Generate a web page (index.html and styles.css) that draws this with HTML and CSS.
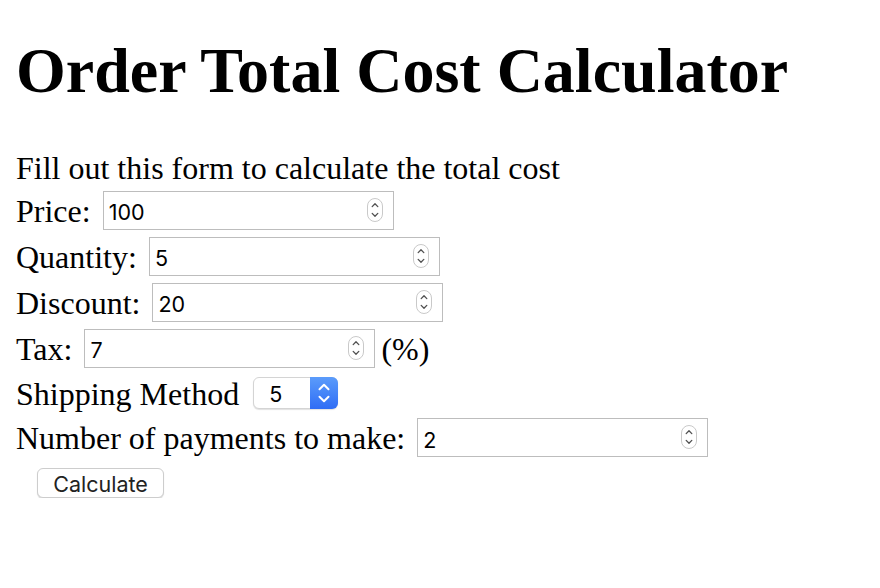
FILE: index.html
```html
<!DOCTYPE html>
<html lang="en">
<head>
<meta charset="utf-8">
<title>Order Total Cost Calculator</title>
<link rel="stylesheet" href="styles.css">
</head>
<body>
<h1 class="title">Order Total Cost Calculator</h1>
<form class="calc">
  <p class="intro">Fill out this form to calculate the total cost</p>

  <div class="row">
    <label class="label" for="price">Price:</label>
    <span class="field">
      <input class="num" id="price" type="text" value="100">
      <span class="spin"><svg width="16" height="24" viewBox="0 0 16 24"><rect x="0.5" y="0.5" width="15" height="23" rx="7.5" fill="#fff" stroke="#c9c9c9"/><path d="M5.2 8.6 L8 5.8 L10.8 8.6 M5.2 15.4 L8 18.2 L10.8 15.4" fill="none" stroke="#505050" stroke-width="1.3" stroke-linecap="round" stroke-linejoin="round"/></svg></span>
    </span>
  </div>

  <div class="row">
    <label class="label" for="qty">Quantity:</label>
    <span class="field">
      <input class="num" id="qty" type="text" value="5">
      <span class="spin"><svg width="16" height="24" viewBox="0 0 16 24"><rect x="0.5" y="0.5" width="15" height="23" rx="7.5" fill="#fff" stroke="#c9c9c9"/><path d="M5.2 8.6 L8 5.8 L10.8 8.6 M5.2 15.4 L8 18.2 L10.8 15.4" fill="none" stroke="#505050" stroke-width="1.3" stroke-linecap="round" stroke-linejoin="round"/></svg></span>
    </span>
  </div>

  <div class="row">
    <label class="label" for="disc">Discount:</label>
    <span class="field">
      <input class="num" id="disc" type="text" value="20">
      <span class="spin"><svg width="16" height="24" viewBox="0 0 16 24"><rect x="0.5" y="0.5" width="15" height="23" rx="7.5" fill="#fff" stroke="#c9c9c9"/><path d="M5.2 8.6 L8 5.8 L10.8 8.6 M5.2 15.4 L8 18.2 L10.8 15.4" fill="none" stroke="#505050" stroke-width="1.3" stroke-linecap="round" stroke-linejoin="round"/></svg></span>
    </span>
  </div>

  <div class="row">
    <label class="label" for="tax">Tax:</label>
    <span class="field">
      <input class="num" id="tax" type="text" value="7">
      <span class="spin"><svg width="16" height="24" viewBox="0 0 16 24"><rect x="0.5" y="0.5" width="15" height="23" rx="7.5" fill="#fff" stroke="#c9c9c9"/><path d="M5.2 8.6 L8 5.8 L10.8 8.6 M5.2 15.4 L8 18.2 L10.8 15.4" fill="none" stroke="#505050" stroke-width="1.3" stroke-linecap="round" stroke-linejoin="round"/></svg></span>
    </span>
    <span class="unit">(%)</span>
  </div>

  <div class="row row-select">
    <label class="label" for="ship">Shipping Method</label>
    <span class="select-wrap">
      <select class="select" id="ship">
        <option>5</option>
        <option>10</option>
        <option>15</option>
      </select>
      <span class="select-btn"><svg width="28" height="32" viewBox="0 0 28 32"><path d="M9.5 12.2 L14 7.8 L18.5 12.2 M9.5 19.8 L14 24.2 L18.5 19.8" fill="none" stroke="#fff" stroke-width="2" stroke-linecap="round" stroke-linejoin="round"/></svg></span>
    </span>
  </div>

  <div class="row row-last">
    <label class="label" for="pay">Number of payments to make:</label>
    <span class="field">
      <input class="num" id="pay" type="text" value="2">
      <span class="spin"><svg width="16" height="24" viewBox="0 0 16 24"><rect x="0.5" y="0.5" width="15" height="23" rx="7.5" fill="#fff" stroke="#c9c9c9"/><path d="M5.2 8.6 L8 5.8 L10.8 8.6 M5.2 15.4 L8 18.2 L10.8 15.4" fill="none" stroke="#505050" stroke-width="1.3" stroke-linecap="round" stroke-linejoin="round"/></svg></span>
    </span>
  </div>

  <button class="btn" type="button">Calculate</button>
</form>
</body>
</html>
```

FILE: styles.css
```css
html, body {
  background: #ffffff;
}

body {
  margin: 0;
  padding: 0 16px;
  font-family: "Liberation Serif", "Times New Roman", serif;
  font-size: 32px;
  line-height: 37px;
  color: #000;
}

.title {
  margin: 34px 0 42px;
  font-size: 64px;
  line-height: 74px;
  font-weight: bold;
}

.calc {
  margin: 0;
}

.intro {
  margin: 0;
  height: 37px;
}

.row {
  display: flex;
  align-items: center;
  height: 46px;
  gap: 12px;
}

.row-select {
  height: 44px;
  gap: 14px;
}

.row-last {
  height: 45px;
}

.label {
  white-space: nowrap;
  position: relative;
  top: 1px;
}

.field {
  position: relative;
  display: inline-flex;
}

.num {
  box-sizing: border-box;
  width: 291px;
  height: 39px;
  margin: 0;
  padding: 4px 30px 0 5px;
  border: 1px solid #bdbdbd;
  border-radius: 0;
  background: #fff;
  font-family: Inter, "Liberation Sans", sans-serif;
  font-size: 21.5px;
  color: #000;
  outline: none;
}

.spin {
  position: absolute;
  right: 11px;
  top: 7px;
  width: 16px;
  height: 24px;
  display: flex;
}

.unit {
  margin-left: -6px;
  position: relative;
  top: 1px;
}

.select-wrap {
  position: relative;
  display: inline-flex;
}

.select {
  -webkit-appearance: none;
  appearance: none;
  box-sizing: border-box;
  width: 85px;
  height: 32px;
  margin: 0;
  padding: 2px 0 0 15px;
  border: 1px solid #d4d4d4;
  border-radius: 6px;
  background: #fff;
  box-shadow: 0 1px 1px rgba(0, 0, 0, 0.12);
  font-family: Inter, "Liberation Sans", sans-serif;
  font-size: 21.5px;
  color: #000;
  outline: none;
}

.select-btn {
  position: absolute;
  right: 0;
  top: 0;
  width: 28px;
  height: 32px;
  border-radius: 0 6px 6px 0;
  background: linear-gradient(#5b9cfb, #2f6df5);
  display: flex;
}

.btn {
  display: block;
  box-sizing: border-box;
  width: 127px;
  height: 30px;
  margin: 8px 0 0 21px;
  padding: 1px 0 0;
  border: 1px solid #cdcdcd;
  border-radius: 6px;
  background: #fff;
  box-shadow: 0 1px 1px rgba(0, 0, 0, 0.15);
  font-family: Inter, "Liberation Sans", sans-serif;
  font-size: 21.5px;
  color: #222;
}
```
